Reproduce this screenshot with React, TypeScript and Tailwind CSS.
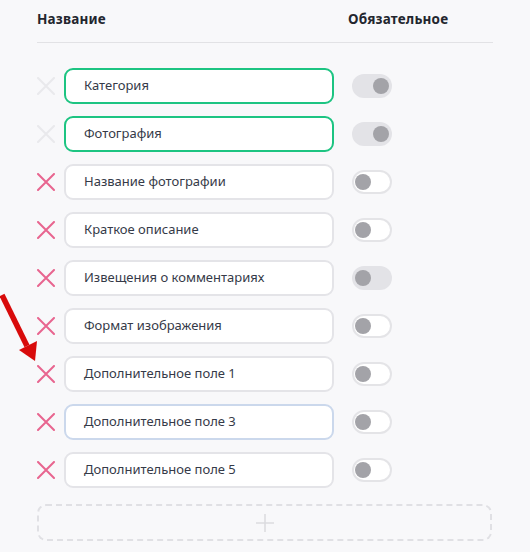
import React from 'react'

type Field = {
  name: string
  locked?: boolean
  filled?: boolean
  on?: boolean
  focused?: boolean
}

const fields: Field[] = [
  { name: 'Категория', locked: true, filled: true, on: true },
  { name: 'Фотография', locked: true, filled: true, on: true },
  { name: 'Название фотографии' },
  { name: 'Краткое описание' },
  { name: 'Извещения о комментариях', filled: true },
  { name: 'Формат изображения' },
  { name: 'Дополнительное поле 1' },
  { name: 'Дополнительное поле 3', focused: true },
  { name: 'Дополнительное поле 5' },
]

const CrossIcon = ({ muted }: { muted?: boolean }) => (
  <svg width="18" height="18" viewBox="0 0 18 18" className="shrink-0">
    <path
      d="M1 1 L17 17 M17 1 L1 17"
      stroke={muted ? '#e9e9ec' : '#e8658f'}
      strokeWidth="2"
      strokeLinecap="round"
    />
  </svg>
)

const Toggle = ({ filled, on }: { filled?: boolean; on?: boolean }) => (
  <div
    className={`flex h-[24px] w-[40px] items-center rounded-full ${
      on ? 'justify-end' : 'justify-start'
    } ${
      filled
        ? 'bg-[#e3e3e7] px-[3px]'
        : 'border-2 border-[#e4e4e7] bg-white px-[1px]'
    }`}
  >
    <div className="h-[16px] w-[16px] rounded-full bg-[#a3a3a8]" />
  </div>
)

const Row = ({ field }: { field: Field }) => {
  const border = field.locked
    ? 'border-[#1dc482]'
    : field.focused
      ? 'border-[#cbd8ec]'
      : 'border-[#e4e4e8]'
  return (
    <div className="flex items-center">
      <CrossIcon muted={field.locked} />
      <div
        className={`ml-[9px] flex h-[36px] w-[270px] items-center rounded-[9px] border-2 bg-white pl-[18px] text-[13px] text-[#353a48] ${border}`}
      >
        {field.name}
      </div>
      <div className="ml-[18px]">
        <Toggle filled={field.filled} on={field.on} />
      </div>
    </div>
  )
}

export default function App() {
  return (
    <div
      className="relative h-[552px] w-[530px] overflow-hidden bg-[#f8f8fa] pl-[37px] pr-[37px]"
      style={{ fontFamily: '"Noto Sans", "Open Sans", sans-serif' }}
    >
      <div className="flex h-[43px] items-center border-b border-[#e2e2e5] pb-[4px] text-[13.5px] font-bold tracking-[0.2px] text-[#23262e]">
        <span className="w-[311px]">Название</span>
        <span>Обязательное</span>
      </div>
      <div className="mt-[25px] flex flex-col gap-[12px]">
        {fields.map((f, i) => (
          <Row key={i} field={f} />
        ))}
      </div>
      <div className="mt-[16px] flex h-[37px] w-[455px] items-center justify-center rounded-[9px] border-2 border-dashed border-[#e0e0e4]">
        <svg width="20" height="20" viewBox="0 0 20 20">
          <path d="M10 1 V19 M1 10 H19" stroke="#dcdce0" strokeWidth="1.6" />
        </svg>
      </div>
      <svg
        className="absolute left-0 top-[290px]"
        width="40"
        height="75"
        viewBox="0 0 40 75"
      >
        <path d="M2 5 L27 56" stroke="#d80b0b" strokeWidth="5.5" />
        <path d="M19 60 L35 71 L37 51 Z" fill="#d80b0b" />
      </svg>
    </div>
  )
}
